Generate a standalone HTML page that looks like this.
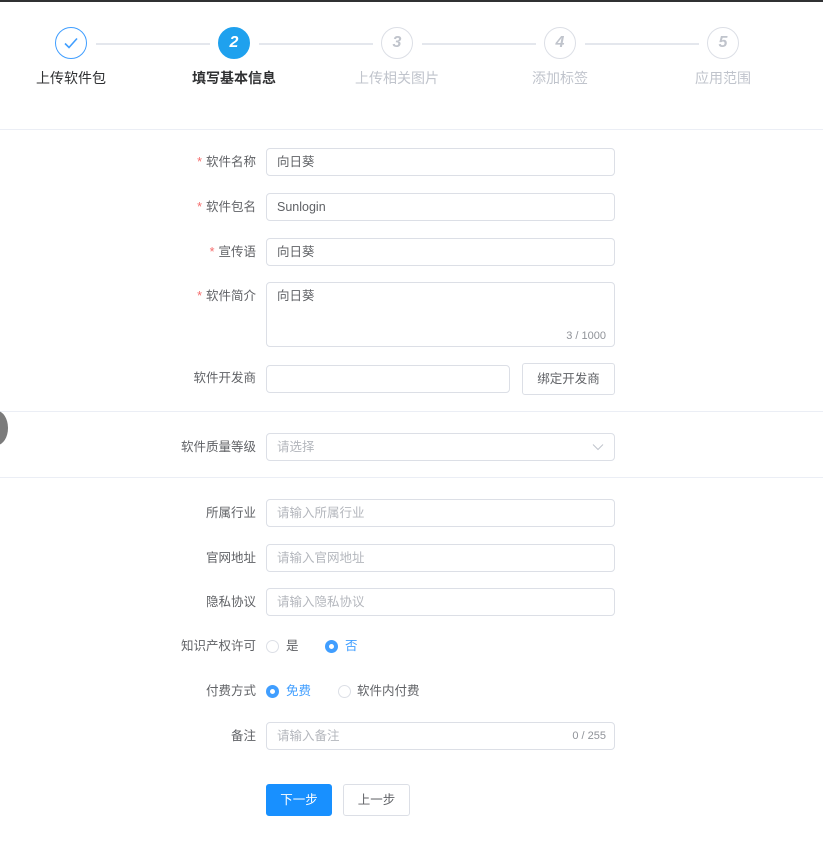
<!DOCTYPE html>
<html><head><meta charset="utf-8"><style>
*{box-sizing:border-box;margin:0;padding:0}
body{width:823px;height:851px;background:#fff;position:relative;overflow:hidden;font-family:"Liberation Sans","Noto Sans CJK SC",sans-serif;font-size:13px;color:#606266}
.a{position:absolute}
.c{position:absolute;width:32px;height:32px;border-radius:50%;border:1px solid #dcdfe6;color:#c0c4cc;font-size:16px;font-style:italic;font-weight:bold;text-align:center;line-height:30px;top:27px}
.ln{position:absolute;top:43px;height:2px;background:#e4e7ed}
.sl{position:absolute;top:68px;width:120px;text-align:center;font-size:14px;color:#c0c4cc}
.hr{position:absolute;left:0;width:823px;height:1px;background:#ebeef5}
.lb{position:absolute;right:567px;text-align:right;font-size:12.5px;color:#606266;line-height:28px}
.lb i{color:#f56c6c;font-style:normal;margin-right:4px}
.in{position:absolute;left:266px;width:349px;height:28px;border:1px solid #dcdfe6;border-radius:4px;padding-left:10px;line-height:26px;font-size:12.5px;color:#606266}
.ph{color:#b4b7bd}
.cnt{position:absolute;right:8px;font-size:11px;color:#909399}
.r{position:absolute;width:13px;height:13px;border-radius:50%;border:1px solid #dcdfe6}
.r.on{border:4px solid #409eff;background:#fff}
.rt{position:absolute;font-size:12.5px;line-height:14px}
.btn{position:absolute;height:32px;border-radius:3px;text-align:center;line-height:30px;font-size:12.5px}
</style></head><body>
<div class="a" style="left:0;top:0;width:823px;height:2px;background:#303133"></div>
<div class="c" style="left:55px;border-color:#409eff;color:#409eff;font-style:normal">
<svg width="18" height="18" viewBox="0 0 18 18" style="margin-top:6px"><path d="M3 9.5l4 4 8-9" fill="none" stroke="#409eff" stroke-width="1.6"/></svg></div>
<div class="ln" style="left:96px;width:114px"></div>
<div class="c" style="left:218px;background:#1fa1ee;border-color:#1fa1ee;color:#fff">2</div>
<div class="ln" style="left:259px;width:114px"></div>
<div class="c" style="left:381px">3</div>
<div class="ln" style="left:422px;width:114px"></div>
<div class="c" style="left:544px">4</div>
<div class="ln" style="left:585px;width:114px"></div>
<div class="c" style="left:707px">5</div>
<div class="sl" style="left:11px;color:#303133">上传软件包</div>
<div class="sl" style="left:174px;color:#303133;font-weight:bold">填写基本信息</div>
<div class="sl" style="left:337px">上传相关图片</div>
<div class="sl" style="left:500px">添加标签</div>
<div class="sl" style="left:663px">应用范围</div>
<div class="hr" style="top:129px"></div>

<div class="lb" style="top:148px"><i>*</i>软件名称</div><div class="in" style="top:148px">向日葵</div>
<div class="lb" style="top:193px"><i>*</i>软件包名</div><div class="in" style="top:193px">Sunlogin</div>
<div class="lb" style="top:238px"><i>*</i>宣传语</div><div class="in" style="top:238px">向日葵</div>
<div class="lb" style="top:282px"><i>*</i>软件简介</div><div class="in" style="top:282px;height:65px;line-height:26px">向日葵<span class="cnt" style="bottom:3px;line-height:14px">3 / 1000</span></div>
<div class="lb" style="top:364px">软件开发商</div><div class="in" style="top:365px;width:244px"></div>
<div class="btn" style="left:522px;top:363px;width:93px;border:1px solid #dcdfe6;color:#606266">绑定开发商</div>
<div class="hr" style="top:411px"></div>
<div class="a" style="left:-14px;top:411px;width:22px;height:34px;border-radius:50%;background:#7b7b7b"></div>
<div class="lb" style="top:433px">软件质量等级</div><div class="in" style="top:433px"><span class="ph">请选择</span>
<svg class="a" style="right:10px;top:9px" width="12" height="8" viewBox="0 0 12 8"><path d="M1 1.5l5 5 5-5" fill="none" stroke="#c0c4cc" stroke-width="1"/></svg></div>
<div class="hr" style="top:477px"></div>

<div class="lb" style="top:499px">所属行业</div><div class="in" style="top:499px"><span class="ph">请输入所属行业</span></div>
<div class="lb" style="top:544px">官网地址</div><div class="in" style="top:544px"><span class="ph">请输入官网地址</span></div>
<div class="lb" style="top:588px">隐私协议</div><div class="in" style="top:588px"><span class="ph">请输入隐私协议</span></div>
<div class="lb" style="top:632px">知识产权许可</div>
<div class="r" style="left:266px;top:640px"></div><div class="rt" style="left:286px;top:639px">是</div>
<div class="r on" style="left:325px;top:640px"></div><div class="rt" style="left:345px;top:639px;color:#409eff">否</div>
<div class="lb" style="top:677px">付费方式</div>
<div class="r on" style="left:266px;top:685px"></div><div class="rt" style="left:286px;top:684px;color:#409eff">免费</div>
<div class="r" style="left:338px;top:685px"></div><div class="rt" style="left:357px;top:684px">软件内付费</div>
<div class="lb" style="top:722px">备注</div><div class="in" style="top:722px"><span class="ph">请输入备注</span><span class="cnt">0 / 255</span></div>
<div class="btn" style="left:266px;top:784px;width:66px;background:#1890ff;color:#fff;border:1px solid #1890ff">下一步</div>
<div class="btn" style="left:343px;top:784px;width:67px;border:1px solid #dcdfe6;color:#606266">上一步</div>
</body></html>
